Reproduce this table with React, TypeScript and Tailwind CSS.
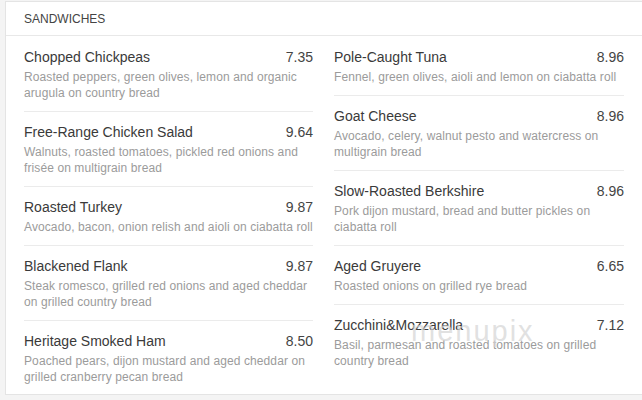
import React from 'react';

interface MenuItem {
  name: string;
  price: string;
  desc: string;
}

const leftItems: MenuItem[] = [
  { name: 'Chopped Chickpeas', price: '7.35', desc: 'Roasted peppers, green olives, lemon and organic arugula on country bread' },
  { name: 'Free-Range Chicken Salad', price: '9.64', desc: 'Walnuts, roasted tomatoes, pickled red onions and frisée on multigrain bread' },
  { name: 'Roasted Turkey', price: '9.87', desc: 'Avocado, bacon, onion relish and aioli on ciabatta roll' },
  { name: 'Blackened Flank', price: '9.87', desc: 'Steak romesco, grilled red onions and aged cheddar on grilled country bread' },
  { name: 'Heritage Smoked Ham', price: '8.50', desc: 'Poached pears, dijon mustard and aged cheddar on grilled cranberry pecan bread' },
];

const rightItems: MenuItem[] = [
  { name: 'Pole-Caught Tuna', price: '8.96', desc: 'Fennel, green olives, aioli and lemon on ciabatta roll' },
  { name: 'Goat Cheese', price: '8.96', desc: 'Avocado, celery, walnut pesto and watercress on multigrain bread' },
  { name: 'Slow-Roasted Berkshire', price: '8.96', desc: 'Pork dijon mustard, bread and butter pickles on ciabatta roll' },
  { name: 'Aged Gruyere', price: '6.65', desc: 'Roasted onions on grilled rye bread' },
  { name: 'Zucchini&Mozzarella', price: '7.12', desc: 'Basil, parmesan and roasted tomatoes on grilled country bread' },
];

const Item: React.FC<{ item: MenuItem; first: boolean }> = ({ item, first }) => (
  <div className={`pb-[10px] ${first ? 'pt-[11px]' : 'pt-[10px] border-t border-[#ebebeb]'}`}>
    <div className="flex justify-between items-center h-[20px] text-[14px] leading-[20px] text-[#3a3a3a]">
      <span>{item.name}</span>
      <span className="text-[#444]">{item.price}</span>
    </div>
    <p className="mt-[2px] text-[12px] leading-[16px] text-[#9b9b9b] tracking-[0.1px]">{item.desc}</p>
  </div>
);

const App: React.FC = () => {
  return (
    <div className="w-[642px] h-[400px] bg-[#f4f4f4] pl-[5px] pt-[1px] pb-[5px] font-['Liberation_Sans',Arial,sans-serif] overflow-hidden">
      <div className="relative h-full bg-white border-t border-b border-l border-[#e4e4e4]">
        <div className="h-[34px] flex items-center px-[18px] border-b border-[#e8e8e8] text-[12px] text-[#444] uppercase">
          Sandwiches
        </div>
        <div className="grid grid-cols-[289px_290px] gap-x-[21px] pl-[18px]">
          <div className="flex flex-col">
            {leftItems.map((item, i) => (
              <Item key={item.name} item={item} first={i === 0} />
            ))}
          </div>
          <div className="flex flex-col">
            {rightItems.map((item, i) => (
              <Item key={item.name} item={item} first={i === 0} />
            ))}
          </div>
        </div>
        {/* watermark */}
        <div className="absolute left-[405px] top-[308px] text-[29px] font-light tracking-[2px] text-[#d4d4d4]/70 pointer-events-none">
          menupix
        </div>
      </div>
    </div>
  );
};

export default App;
